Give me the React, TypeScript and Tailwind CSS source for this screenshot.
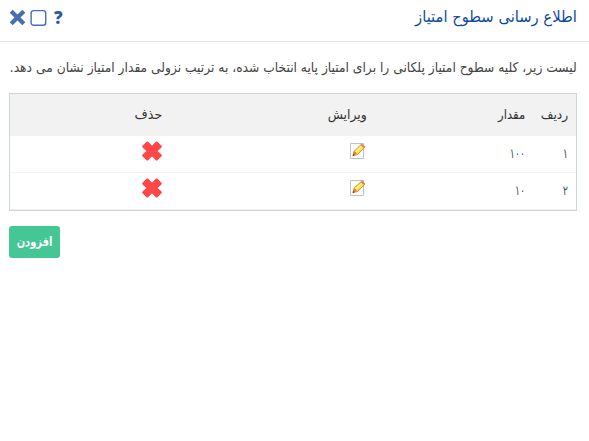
import React from "react";

function EditIcon() {
  return (
    <svg width="16" height="17" viewBox="0 0 16 17" className="block">
      <path d="M.5 1.5h13v15H.5z" fill="#fdfdfd" stroke="#bfc2c6" />
      <path d="M3 13.5l1.2-4.5L11.5 2.3l3.3 3L7.5 12.5z" fill="#ffe24a" stroke="#d9822b" strokeWidth=".9" />
      <path d="M10.5 3l1.5-1.3 3.3 3L14 6z" fill="#f47a3c" />
      <path d="M5.5 10l6-5.5" stroke="#fff6a8" strokeWidth="1.2" />
      <path d="M3 13.5l1.1-4 1.5.6.5 1.2 1.2.5z" fill="#f0762c" />
      <path d="M2.6 13.9l.5-2 1.5 1.4z" fill="#5a2a12" />
    </svg>
  );
}

function DeleteIcon() {
  return (
    <svg width="20" height="20" viewBox="0 0 20 20" className="block">
      <path
        d="M5.3 1.7 10 6.3l4.7-4.6 3.9 3.9L14 10l4.6 4.4-3.9 3.9L10 13.7l-4.7 4.6-3.9-3.9L6 10 1.4 5.6z"
        fill="#ff4747"
        stroke="#ff4747"
        strokeWidth="2.4"
        strokeLinejoin="round"
      />
    </svg>
  );
}

const rows = [
  { index: "۱", amount: "۱۰۰" },
  { index: "۲", amount: "۱۰" },
];

export default function App() {
  return (
    <div dir="rtl" className="h-[441px] w-[589px] overflow-hidden bg-white font-['DejaVu_Sans',sans-serif] text-[#444]">
      <header className="flex h-[42px] items-start justify-between border-b border-[#e2e2e2] pr-3 pl-[9px]">
        <h1 className="pt-1.5 text-[16px] leading-[22px] whitespace-nowrap text-[#0f4a9e]">
          <span className="inline-block origin-right scale-x-[0.92]">اطلاع رسانی سطوح امتیاز</span>
        </h1>
        <div dir="ltr" className="flex pt-[9px] text-[#466fae]">
          <svg width="17" height="17" viewBox="0 0 17 17">
            <path d="M2.2 2.2l12.6 12.6M14.8 2.2L2.2 14.8" stroke="currentColor" strokeWidth="4.2" />
          </svg>
          <svg width="17" height="17" viewBox="0 0 17 17" className="ml-1">
            <rect x="1.1" y="1.6" width="14.6" height="14.6" rx="2.5" fill="none" stroke="currentColor" strokeWidth="1.4" />
          </svg>
          <span className="ml-[7px] font-['Open_Sans',sans-serif] text-[17px] leading-[17px] font-extrabold text-[#2b5ba5]">?</span>
        </div>
      </header>
      <main className="pr-3 pl-[9px]">
        <p className="mt-[14px] h-[37px] text-[13.5px] leading-[22px] whitespace-nowrap">
          <span className="inline-block origin-right scale-x-[0.909]">
            لیست زیر، کلیه سطوح امتیاز پلکانی را برای امتیاز پایه انتخاب شده، به ترتیب نزولی مقدار امتیاز نشان می دهد.
          </span>
        </p>
        <section className="h-[118px] border border-[#cbd5da] text-[13px]">
          <div className="grid h-[42px] grid-cols-[43px_158px_205px_160px] items-center bg-[#f2f2f2] text-[#333] *:px-2">
            <div><span className="inline-block origin-right scale-x-[0.94]">ردیف</span></div>
            <div><span className="inline-block origin-right scale-x-[0.9]">مقدار</span></div>
            <div><span className="inline-block origin-right scale-x-[0.96]">ویرایش</span></div>
            <div><span className="inline-block origin-right scale-x-[0.98]">حذف</span></div>
          </div>
          {rows.map((row) => (
            <div
              key={row.index}
              className="grid h-[37px] grid-cols-[43px_158px_205px_160px] border-b border-[#f3f3f3] text-[#40525e] *:px-2"
            >
              <div className="pt-2 text-[13px] leading-[20px]"><span className="inline-block origin-right scale-x-[0.75]">{row.index}</span></div>
              <div className="pt-2 text-[13px] leading-[20px]"><span className="inline-block origin-right scale-x-[0.72]">{row.amount}</span></div>
              <div className="pt-[6px]"><div className="mr-px"><EditIcon /></div></div>
              <div className="pt-[5px]"><DeleteIcon /></div>
            </div>
          ))}
        </section>
        <button className="mt-[15px] mr-auto flex h-8 w-[51px] items-center justify-center rounded-[3px] bg-[#44c794] text-[13px] font-bold text-white">
          <span className="inline-block scale-x-[0.76]">افزودن</span>
        </button>
      </main>
    </div>
  );
}
